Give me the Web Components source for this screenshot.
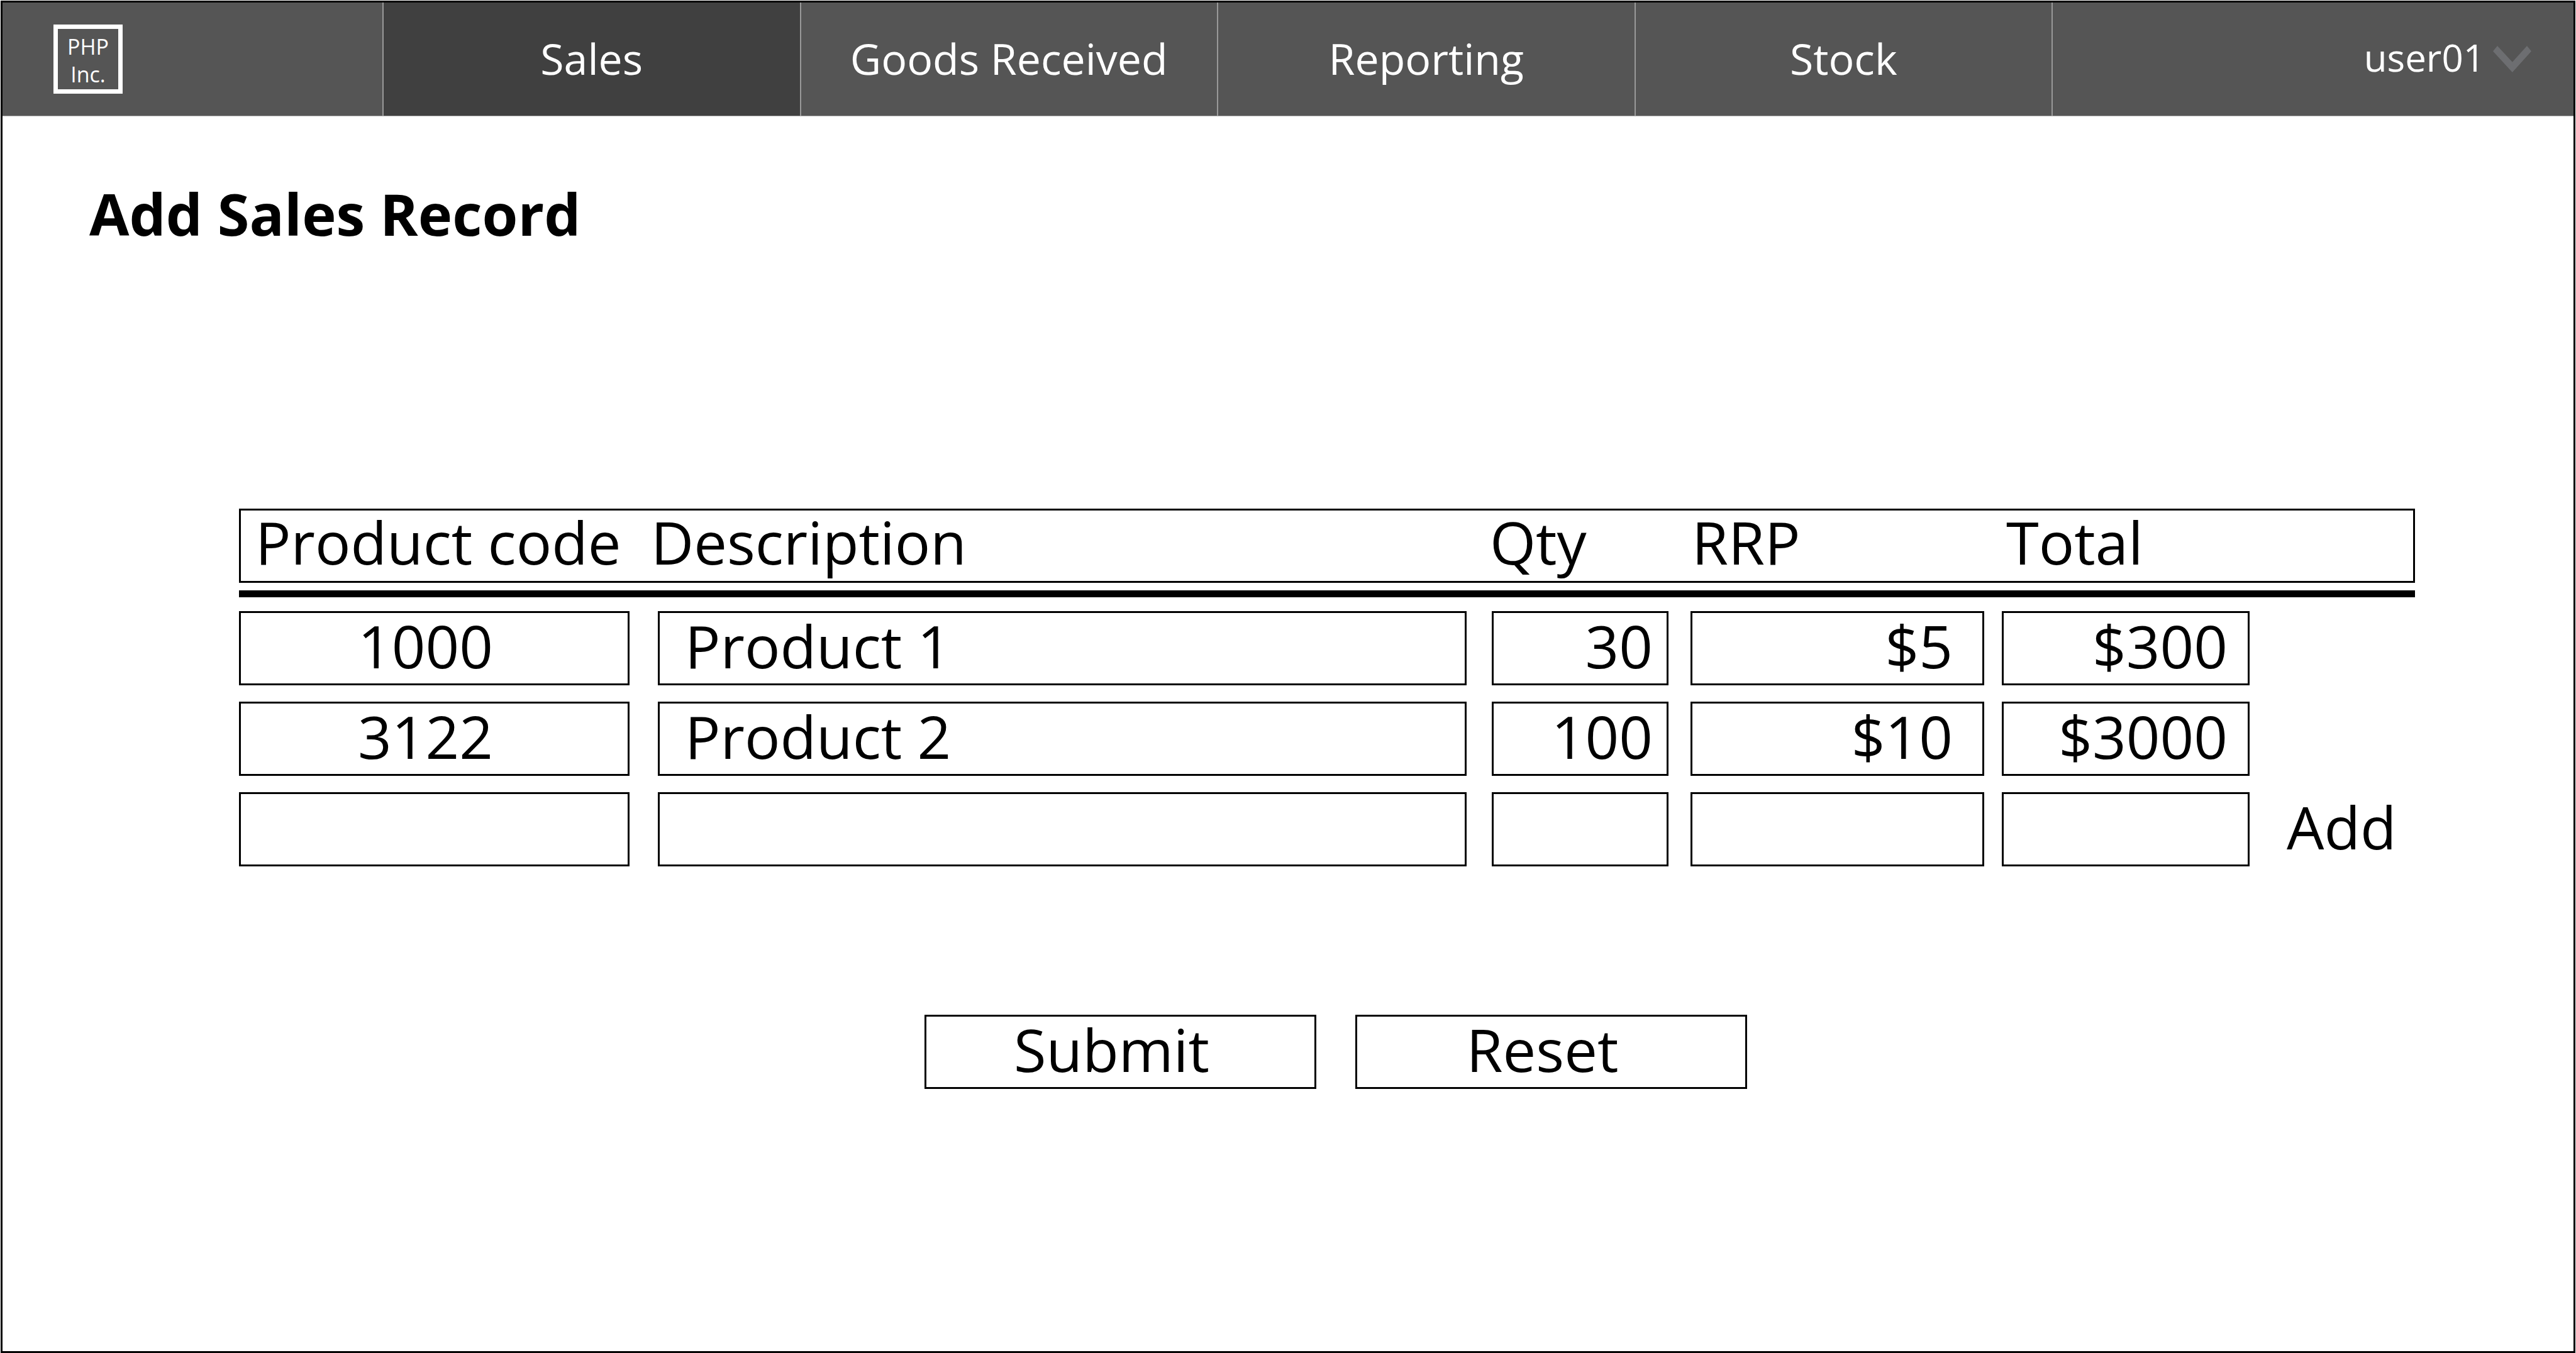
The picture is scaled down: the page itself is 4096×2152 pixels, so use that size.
<!DOCTYPE html>
<html lang="en">
<head>
<meta charset="utf-8">
<title>Add Sales Record</title>
<style>
  body { margin: 0; padding: 1px 1px 0; background: #fff; color: #000; font-family: "Open Sans", "Noto Sans", sans-serif; }
</style>
</head>
<body>
<app-shell>
  <nav-bar slot="nav">
    <brand-logo slot="brand"><span>PHP</span><span>Inc.</span></brand-logo>
    <nav-tab href="#sales" active>Sales</nav-tab>
    <nav-tab href="#goods">Goods Received</nav-tab>
    <nav-tab href="#reporting">Reporting</nav-tab>
    <nav-tab href="#stock">Stock</nav-tab>
    <user-menu slot="user">user01</user-menu>
  </nav-bar>
  <page-title>Add Sales Record</page-title>
  <sales-form></sales-form>
</app-shell>

<script>
  const define = (name, html, setup) => {
    const template = document.createElement('template');
    template.innerHTML = html;
    customElements.define(name, class extends HTMLElement {
      constructor() {
        super();
        this.attachShadow({ mode: 'open' }).append(template.content.cloneNode(true));
      }
      connectedCallback() {
        if (setup) setup(this, this.shadowRoot);
      }
    });
  };

  define('app-shell', `
    <style>
      :host { display: flex; flex-direction: column; box-sizing: border-box;
              min-height: calc(100vh - 1px); border: 3px solid #000; }
      main { padding: 95px 252px 96px 138px; }
    </style>
    <slot name="nav"></slot>
    <main><slot></slot></main>`);

  define('nav-bar', `
    <style>
      :host { display: block; background: #555; color: #fff; border-bottom: 1px solid #aaa; }
      nav { display: grid; grid-template-columns: 1208fr repeat(4, 1327fr) 1660fr; height: 180px; }
      .user { display: flex; align-items: center; justify-content: flex-end;
              border-left: 2px solid #999; padding-right: 67px; }
      .brand { display: flex; align-items: center; padding-left: 81px; }
    </style>
    <nav aria-label="Main">
      <div class="brand"><slot name="brand"></slot></div>
      <slot></slot>
      <div class="user"><slot name="user"></slot></div>
    </nav>`);

  define('brand-logo', `
    <style>
      :host { display: flex; flex-direction: column; align-items: center; justify-content: center;
              box-sizing: border-box; width: 110px; height: 110px; padding-top: 3px;
              border: 7px solid #fff; font-size: 34px; line-height: 44px; }
    </style>
    <slot></slot>`);

  define('nav-tab', `
    <style>
      :host { display: flex; border-left: 2px solid #999; font-size: 68px; }
      :host([active]) { background: #404040; }
      a { flex: 1; display: flex; align-items: center; justify-content: center;
          padding-bottom: 4px; color: inherit; text-decoration: none; white-space: nowrap; }
    </style>
    <a><slot></slot></a>`, (host, root) => {
      const link = root.querySelector('a');
      link.href = host.getAttribute('href');
      if (host.hasAttribute('active')) link.setAttribute('aria-current', 'page');
    });

  define('user-menu', `
    <style>
      :host { display: block; }
      button { display: flex; align-items: center; gap: 13px; padding: 0; border: 0;
               background: none; color: inherit; font: inherit; font-size: 60px; }
      span { padding-bottom: 6px; }
      svg { display: block; width: 61px; height: 42px; }
    </style>
    <button type="button" aria-haspopup="menu">
      <span><slot></slot></span>
      <svg viewBox="0 0 192 135" preserveAspectRatio="none" aria-hidden="true">
        <path fill="#6d6e71" d="M22 0 97 83 170 0 192 27 97 135 0 27Z"/>
      </svg>
    </button>`);

  define('page-title', `
    <style>
      :host { display: block; }
      h1 { margin: 0; font-size: 92px; line-height: 120px; font-weight: 700; }
    </style>
    <h1><slot></slot></h1>`);

  define('action-button', `
    <style>
      :host { display: block; flex: 0 1 623px; }
      button { display: block; box-sizing: border-box; width: 100%; height: 118px; margin: 0;
               padding: 0 28px 8px 0; border: 3px solid #000; border-radius: 0; background: #fff;
               color: inherit; font: inherit; font-size: 94px; line-height: 104px; }
    </style>
    <button type="button"><slot></slot></button>`);

  define('sales-form', `
    <style>
      :host { display: block; margin: 409px 0 0 238px; font-size: 94px; }
      form { display: block; margin: 0; }
      table, thead, tbody { display: block; }
      thead { padding-bottom: 12px; border-bottom: 11px solid #000; margin-bottom: 22px; }
      tr { display: grid; }
      thead tr { grid-template-columns: 652fr 1334fr 321fr 500fr 647fr; box-sizing: border-box;
                 height: 118px; border: 3px solid #000; }
      th { display: block; padding: 0; font-weight: 400; text-align: left; line-height: 100px;
           white-space: nowrap; }
      th:first-child { padding-left: 23px; }
      tbody { display: flex; flex-direction: column; gap: 26px; }
      tbody tr { grid-template-columns: 666fr 1326fr 316fr 495fr 394fr 263fr; }
      td { display: block; padding: 0; }
      .code { padding-right: 45px; }
      .desc { padding-right: 40px; }
      .qty { padding-right: 35px; }
      .rrp { padding-right: 28px; }
      .add { padding-left: 59px; }
      input { display: block; box-sizing: border-box; width: 100%; height: 118px; margin: 0;
              padding: 0 0 8px; border: 3px solid #000; border-radius: 0; background: #fff;
              color: inherit; font: inherit; line-height: 104px; }
      .code input { padding-right: 28px; text-align: center; }
      .desc input { padding-left: 40px; }
      .qty input { padding-right: 22px; text-align: right; }
      .rrp input { padding-right: 47px; text-align: right; }
      .total input { padding-right: 32px; text-align: right; }
      .add button { display: block; height: 118px; margin: 0; padding: 0 0 8px; border: 0;
                    background: none; color: inherit; font: inherit; line-height: 104px; }
      .actions { display: flex; justify-content: center; gap: 62px; margin-top: 236px;
                 padding-left: 28px; }
    </style>
    <form>
      <table>
        <thead><tr>
          <th scope="col">Product code</th><th scope="col">Description</th><th scope="col">Qty</th>
          <th scope="col">RRP</th><th scope="col">Total</th>
        </tr></thead>
        <tbody></tbody>
      </table>
      <div class="actions">
        <action-button>Submit</action-button>
        <action-button>Reset</action-button>
      </div>
    </form>`, (host, root) => {
      const columns = [['code', 'Product code'], ['desc', 'Description'], ['qty', 'Qty'], ['rrp', 'RRP'], ['total', 'Total']];
      const records = [
        ['1000', 'Product 1', '30', '$5', '$300'],
        ['3122', 'Product 2', '100', '$10', '$3000'],
        ['', '', '', '', '']
      ];
      root.querySelector('tbody').innerHTML = records.map((record, r) => '<tr>' +
        columns.map(([key, label], c) =>
          `<td class="${key}"><input type="text" name="${key}${r}" aria-label="${label}" value="${record[c]}"></td>`).join('') +
        (r === records.length - 1 ? '<td class="add"><button type="button">Add</button></td>' : '') +
        '</tr>').join('');
    });
</script>
</body>
</html>
